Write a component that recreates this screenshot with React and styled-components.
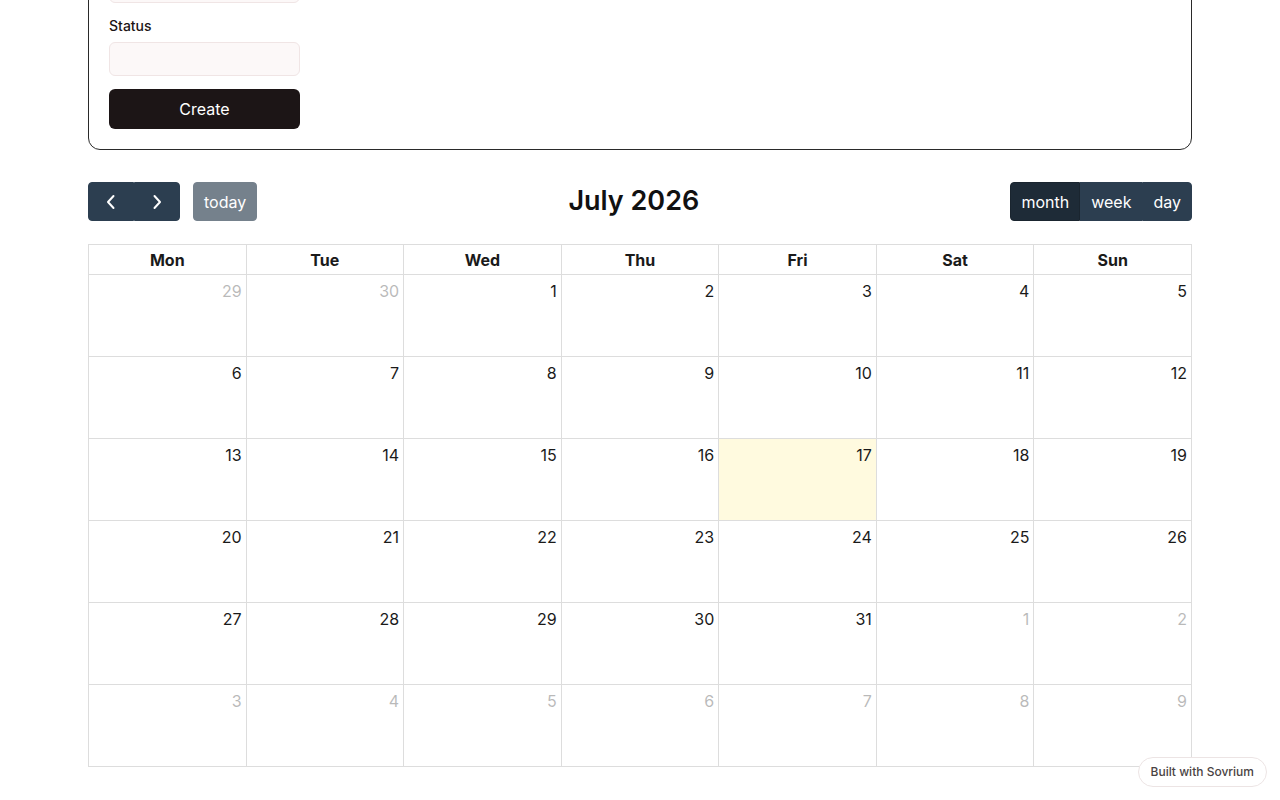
import React from "react";
import styled, { createGlobalStyle } from "styled-components";

const GlobalStyle = createGlobalStyle`
	body {
		margin: 0;
		font-family: Inter, "Noto Sans", "Liberation Sans", sans-serif;
		color: #1a1a1a;
		background: #fff;
	}
	* {
		box-sizing: border-box;
	}
`;

const days = ["Mon", "Tue", "Wed", "Thu", "Fri", "Sat", "Sun"];

// six weeks shown in month view, starting Mon 29 June
const buildWeeks = () => {
	const weeks = [];
	const start = new Date(2026, 5, 29);
	for (let w = 0; w < 6; w++) {
		const row = [];
		for (let d = 0; d < 7; d++) {
			const date = new Date(start);
			date.setDate(start.getDate() + w * 7 + d);
			row.push({
				day: date.getDate(),
				other: date.getMonth() !== 6,
				today: date.getMonth() === 6 && date.getDate() === 17
			});
		}
		weeks.push(row);
	}
	return weeks;
};

const Chevron = ({ left }) => (
	<svg width="10" height="16" viewBox="0 0 10 16" fill="none">
		<polyline
			points={left ? "7.5,2 2,8 7.5,14" : "2.5,2 8,8 2.5,14"}
			stroke="#fff"
			strokeWidth="2"
			strokeLinecap="round"
			strokeLinejoin="round"
		/>
	</svg>
);

const App = () => {
	const weeks = buildWeeks();

	return (
		<>
			<GlobalStyle />
			<Page>
				<FormCard>
					<Field>
						<Input aria-label="Title" />
					</Field>
					<Field>
						<Label>Status</Label>
						<Input />
					</Field>
					<CreateButton>Create</CreateButton>
				</FormCard>

				<Toolbar>
					<ToolbarChunk>
						<ButtonGroup>
							<CalButton aria-label="prev">
								<Chevron left />
							</CalButton>
							<CalButton aria-label="next">
								<Chevron />
							</CalButton>
						</ButtonGroup>
						<CalButton disabled $spaced>
							today
						</CalButton>
					</ToolbarChunk>
					<Title>July 2026</Title>
					<ToolbarChunk>
						<ButtonGroup>
							<CalButton $active>month</CalButton>
							<CalButton>week</CalButton>
							<CalButton>day</CalButton>
						</ButtonGroup>
					</ToolbarChunk>
				</Toolbar>

				<Grid>
					<thead>
						<tr>
							{days.map((d) => (
								<HeadCell key={d}>{d}</HeadCell>
							))}
						</tr>
					</thead>
					<tbody>
						{weeks.map((row, i) => (
							<tr key={i}>
								{row.map((c, j) => (
									<DayCell key={j} $today={c.today}>
										<DayNumber $other={c.other}>{c.day}</DayNumber>
									</DayCell>
								))}
							</tr>
						))}
					</tbody>
				</Grid>
			</Page>
			<Badge>Built with Sovrium</Badge>
		</>
	);
};

export default App;

const Page = styled.div`
	width: 1104px;
	margin: -52px auto 0;
	padding-bottom: 40px;
`;

const FormCard = styled.div`
	border: 1px solid #2a2a2a;
	border-radius: 12px;
	padding: 20px;
	display: flex;
	flex-direction: column;
	gap: 13px;
`;

const Field = styled.div`
	display: flex;
	flex-direction: column;
	gap: 6px;
	width: 191px;
`;

const Label = styled.label`
	font-size: 14px;
	line-height: 20px;
	font-weight: 500;
	color: #1c1516;
`;

const Input = styled.input`
	height: 34px;
	width: 100%;
	border: 1px solid #f0e5e5;
	border-radius: 6px;
	background: #fcf8f8;
	outline: none;
	padding: 0 10px;
`;

const CreateButton = styled.button`
	width: 191px;
	height: 40px;
	border: none;
	border-radius: 6px;
	background: #1c1516;
	color: #fff;
	font-family: inherit;
	font-size: 16px;
	font-weight: 400;
	cursor: pointer;
`;

const Toolbar = styled.div`
	margin-top: 32px;
	margin-bottom: 23px;
	display: flex;
	align-items: center;
	justify-content: space-between;
`;

const ToolbarChunk = styled.div`
	display: flex;
	align-items: center;
`;

const ButtonGroup = styled.div`
	display: inline-flex;

	& > button {
		border-radius: 0;
	}
	& > button:first-child {
		border-top-left-radius: 4px;
		border-bottom-left-radius: 4px;
	}
	& > button:last-child {
		border-top-right-radius: 4px;
		border-bottom-right-radius: 4px;
	}
`;

const CalButton = styled.button`
	height: 39px;
	padding: 0 10px;
	min-width: 46px;
	display: inline-flex;
	align-items: center;
	justify-content: center;
	margin-left: ${(p) => (p.$spaced ? "13px" : "0")};
	border: 1px solid ${(p) => (p.$active ? "#1a252f" : "#2c3e50")};
	border-radius: 4px;
	background: ${(p) => (p.$active ? "#1e2b37" : "#2c3e50")};
	color: #fff;
	font-family: inherit;
	font-size: 16px;
	line-height: 24px;
	cursor: pointer;

	&:disabled {
		opacity: 0.65;
		cursor: default;
	}
`;

const Title = styled.h2`
	margin: 0;
	font-size: 27px;
	font-weight: 600;
	color: #111;
	line-height: 1.2;
`;

const Grid = styled.table`
	width: 100%;
	table-layout: fixed;
	border-collapse: collapse;
	border: 1px solid #ddd;
`;

const HeadCell = styled.th`
	height: 30px;
	padding: 2px 4px;
	border: 1px solid #ddd;
	font-size: 16px;
	font-weight: 700;
	color: #1a1a1a;
	text-align: center;
`;

const DayCell = styled.td`
	height: 82px;
	padding: 0;
	vertical-align: top;
	border: 1px solid #ddd;
	background: ${(p) => (p.$today ? "rgba(255, 220, 40, 0.15)" : "transparent")};
`;

const DayNumber = styled.div`
	padding: 4px;
	text-align: right;
	font-size: 16px;
	line-height: 24px;
	color: #1a1a1a;
	opacity: ${(p) => (p.$other ? 0.3 : 1)};
`;

const Badge = styled.div`
	position: fixed;
	right: 13px;
	bottom: 13px;
	padding: 6px 12px;
	border: 1px solid #ece4e4;
	border-radius: 999px;
	background: #fff;
	color: #4a4343;
	font-size: 12px;
	line-height: 16px;
	font-weight: 500;
`;
